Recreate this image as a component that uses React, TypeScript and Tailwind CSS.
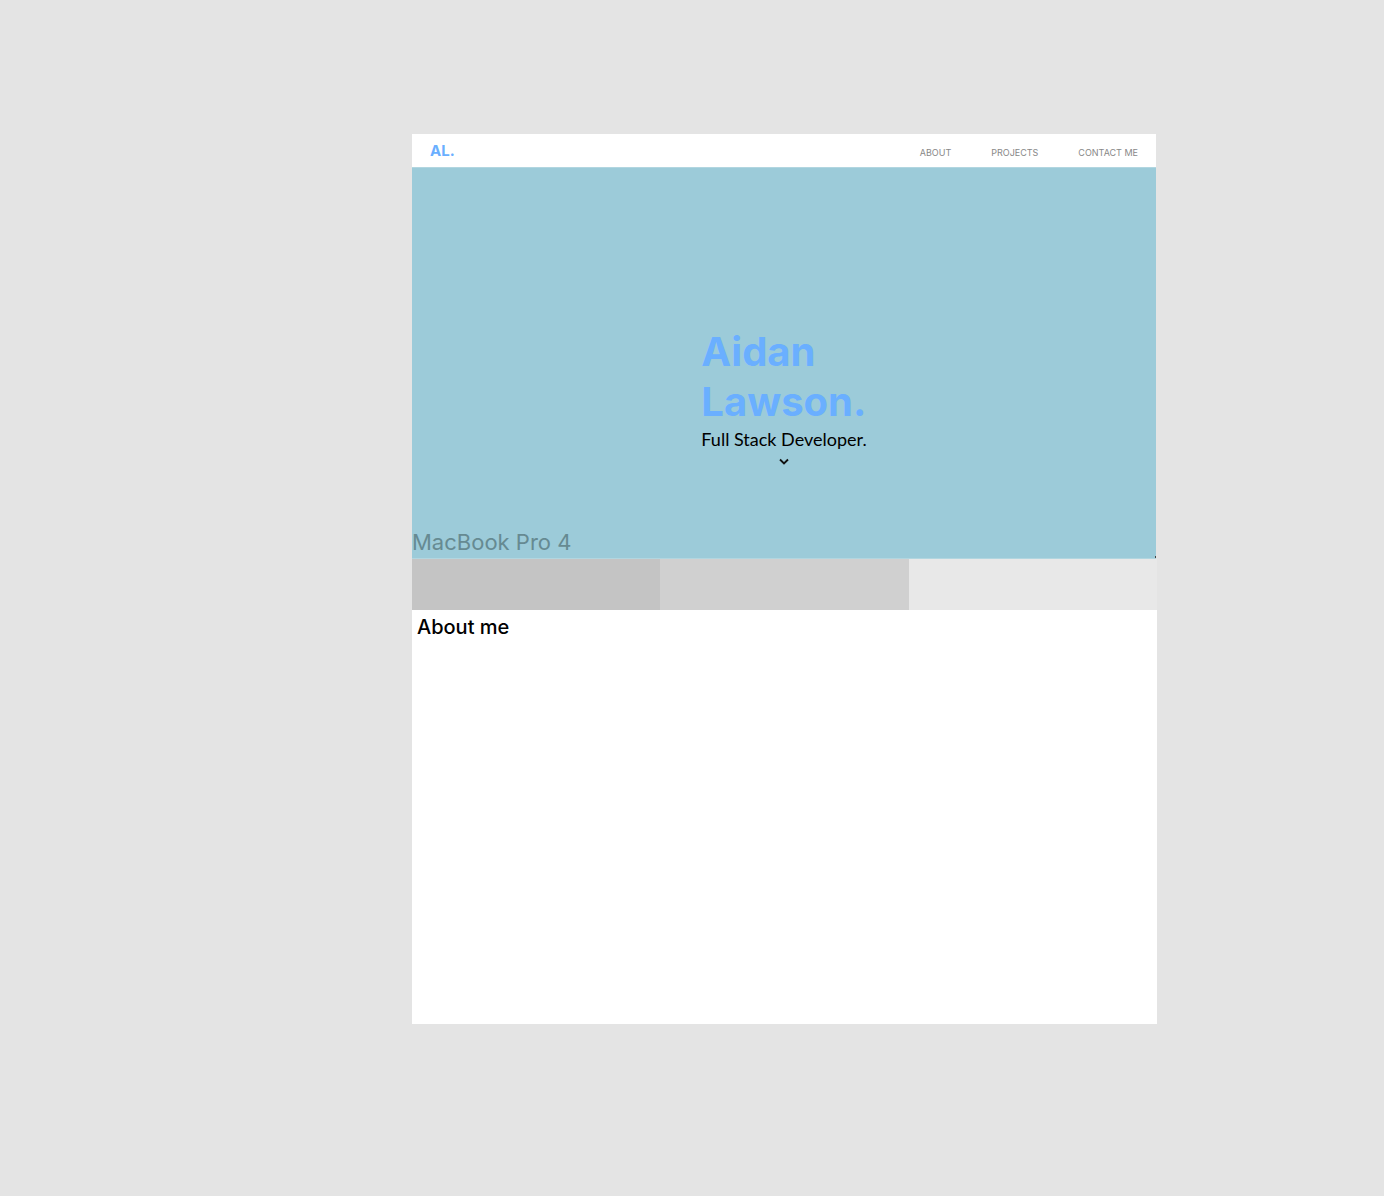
import React from 'react';

const links = [
  { label: 'ABOUT', href: '#about' },
  { label: 'PROJECTS', href: '#projects' },
  { label: 'CONTACT ME', href: '#contact' },
];

function NavBar() {
  return (
    <header className="mr-px flex items-center justify-between bg-white px-[18px] text-[#6aafff]">
      <a href="#top" className="py-2 font-[Inter,sans-serif] text-[15px] leading-[17px] font-bold">
        AL.
      </a>
      <nav className="flex gap-10 pt-1 font-[Inter,sans-serif] text-[9px] leading-3 text-[#888888]">
        {links.map((link) => (
          <a key={link.href} href={link.href}>
            {link.label}
          </a>
        ))}
      </nav>
    </header>
  );
}

function Hero() {
  return (
    <section
      id="top"
      className="relative mr-px flex flex-col items-center border-y border-[#b2d6e0] bg-[#9ccbd9] pt-[159px] pb-[88px]"
    >
      <div className="flex flex-col">
        <h1 className="font-[Inter,sans-serif] text-[40px] leading-[50px] font-bold text-[#6aafff]">
          Aidan
          <br />
          Lawson.
        </h1>
        <p className="font-[Lato,sans-serif] text-[18px] leading-[25px] text-black">Full Stack Developer.</p>
        <a href="#about" aria-label="Scroll to about" className="mt-0.5 self-center">
          <svg className="block h-4 w-4" viewBox="0 0 16 16" fill="none" stroke="#111111" strokeWidth="1.8">
            <path d="M4 5.5 8 9.5 12 5.5" />
          </svg>
        </a>
      </div>
      <span className="absolute bottom-1 left-0 font-[Inter,sans-serif] text-[22px] leading-6 text-[#668a92]">
        MacBook Pro 4
      </span>
      <span className="absolute right-0 bottom-0 h-0.5 w-px bg-[#444444]" />
    </section>
  );
}

export default function App() {
  return (
    <div className="min-h-screen bg-[#e4e4e4] pt-[134px] pr-[227px] pb-[172px] pl-[412px]">
      <NavBar />
      <Hero />
      <section id="projects" className="grid h-[51px] grid-cols-3">
        <div className="bg-[#c4c4c4]" />
        <div className="bg-[#d0d0d0]" />
        <div className="bg-[#e8e8e8]" />
      </section>
      <section id="about" className="min-h-[414px] bg-white px-[5px] pt-1">
        <h2 className="font-[Inter,sans-serif] text-[20px] leading-[26px] font-medium text-black">About me</h2>
      </section>
    </div>
  );
}
